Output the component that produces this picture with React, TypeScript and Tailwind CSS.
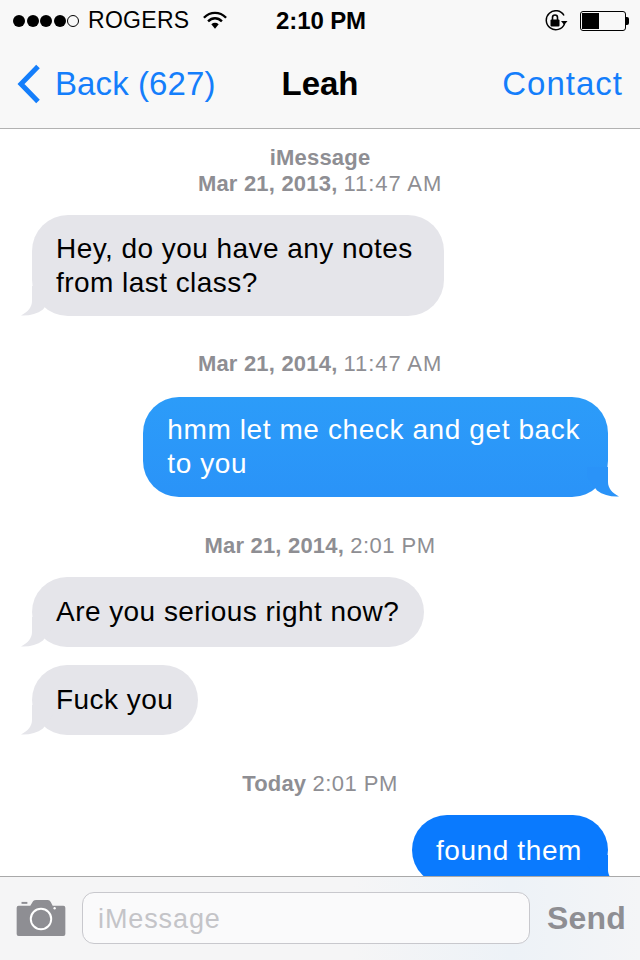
import React from "react";

function Tail({ side, color }: { side: "left" | "right"; color: string }) {
  return (
    <svg
      width="34"
      height="30"
      viewBox="0 0 34 30"
      className={side === "left" ? "absolute left-[-11px] bottom-0" : "absolute right-[-11px] bottom-0 -scale-x-100"}
    >
      <path d="M11 0 L11 15 C11 21 7 26 0 29.5 C8 30 16 28 22 23.5 L32 10 L32 0 Z" fill={color} />
    </svg>
  );
}

function Stamp({ bold, light, cls, lightCls }: { bold: string; light: string; cls: string; lightCls: string }) {
  return (
    <div className={`shrink-0 text-center text-[22px] leading-[26px] text-[#8e8e93] ${cls}`}>
      <span className="font-bold tracking-[0.2px]">{bold}</span>{" "}
      <span className={lightCls}>{light}</span>
    </div>
  );
}

function In({ children, cls }: { children: React.ReactNode; cls: string }) {
  return (
    <div className={`relative ml-[32px] shrink-0 rounded-[36px] bg-[#e5e5ea] pl-[24px] text-[28px] leading-[34px] tracking-[0.45px] text-black ${cls}`}>
      <Tail side="left" color="#e5e5ea" />
      <div className="relative">{children}</div>
    </div>
  );
}

function Out({ children, cls, tail }: { children: React.ReactNode; cls: string; tail: string }) {
  return (
    <div className={`relative mr-[32px] shrink-0 self-end rounded-[36px] pl-[24px] text-[28px] leading-[34px] tracking-[0.6px] text-white ${cls}`}>
      <Tail side="right" color={tail} />
      <div className="relative">{children}</div>
    </div>
  );
}

export default function App() {
  return (
    <div className="flex h-[960px] w-[640px] flex-col overflow-hidden bg-white font-['Liberation_Sans',Arial,sans-serif]">
      <header className="h-[129px] shrink-0 border-b border-[#b2b2b2] bg-[#f8f8f8]">
        <div className="relative flex h-[41px] items-center pl-[13px] pr-[11px] text-black">
          <div className="flex items-center gap-[1.5px]">
            {[0, 1, 2, 3].map((i) => (
              <span key={i} className="h-[12px] w-[12px] rounded-full bg-black" />
            ))}
            <span className="h-[12px] w-[12px] rounded-full border border-black" />
          </div>
          <span className="ml-[9px] text-[23px] leading-none tracking-[0.3px]">ROGERS</span>
          <svg width="24" height="19" viewBox="0 0 26 20" className="ml-[14px]">
            <path d="M1 7 C8 0 18 0 25 7 M5.5 11 C10 6.5 16 6.5 20.5 11" fill="none" stroke="black" strokeWidth="2.6" />
            <path d="M9 14 C11.5 12 14.5 12 17 14 L13 19 Z" fill="black" />
          </svg>
          <span className="absolute left-[276px] text-[24px] font-bold leading-none tracking-[-0.1px]">2:10 PM</span>
          <div className="ml-auto flex items-center gap-[12px]">
            <svg width="24" height="22" viewBox="0 0 24 22">
              <path d="M20 5.5 A9.5 9.5 0 1 0 20.5 14" fill="none" stroke="black" strokeWidth="1.5" />
              <path d="M17 11 L23.5 11 L20.2 15 Z" fill="black" />
              <rect x="6.5" y="9.5" width="9" height="7" rx="1" fill="black" />
              <path d="M8.5 10 V7.5 A2.5 2.5 0 0 1 13.5 7.5 V10" fill="none" stroke="black" strokeWidth="1.6" />
            </svg>
            <div className="flex items-center">
              <div className="h-[20px] w-[46px] rounded-[3px] border border-black p-[1px]">
                <div className="h-full w-[17px] bg-black" />
              </div>
              <div className="h-[8px] w-[3px] rounded-r-[2px] bg-black" />
            </div>
          </div>
        </div>
        <div className="relative flex h-[87px] items-center justify-between pb-[2px] pl-[17px] pr-[17px] text-[33px] text-[#147efb]">
          <div className="flex items-center gap-[14px]">
            <svg width="24" height="40" viewBox="0 0 24 40">
              <path d="M21 2.5 L4 20 L21 37.5" fill="none" stroke="#147efb" strokeWidth="5" />
            </svg>
            <span className="tracking-[0.1px]">Back (627)</span>
          </div>
          <span className="absolute left-0 right-0 text-center font-bold text-black">Leah</span>
          <span className="relative tracking-[1px]">Contact</span>
        </div>
      </header>

      <main className="flex min-h-0 flex-1 flex-col overflow-hidden">
        <Stamp bold="iMessage" light="" lightCls="" cls="mt-[16px]" />
        <Stamp bold="Mar 21, 2013," light="11:47 AM" lightCls="tracking-[0.9px]" cls="" />
        <In cls="mt-[18px] w-[412px] py-[16.5px]">
          Hey, do you have any notes
          <br />
          from last class?
        </In>
        <Stamp bold="Mar 21, 2014," light="11:47 AM" lightCls="tracking-[0.9px]" cls="mt-[35px]" />
        <Out cls="mt-[20px] bg-[linear-gradient(#2c9cf9,#2a93f8)] py-[16px] pr-[28px]" tail="#2a93f8">
          hmm let me check and get back
          <br />
          to you
        </Out>
        <Stamp bold="Mar 21, 2014," light="2:01 PM" lightCls="tracking-[0.5px]" cls="mt-[36px]" />
        <In cls="mt-[18px] w-fit py-[18px] pr-[25px]">Are you serious right now?</In>
        <In cls="mt-[18px] w-fit py-[18px] pr-[25px]">Fuck you</In>
        <Stamp bold="Today" light="2:01 PM" lightCls="tracking-[0.5px]" cls="mt-[36px]" />
        <Out cls="mt-[18px] bg-[#0a7afe] pb-[17px] pr-[26px] pt-[19px]" tail="#0a7afe">
          found them
        </Out>
      </main>

      <footer className="flex h-[84px] shrink-0 items-center border-t border-[#a9a9a9] bg-[linear-gradient(90deg,#f5f5f6,#f5f5f6_55%,#edf2f7_80%,#f4f5f7)] pb-[2px] pl-[16px] pr-[14px]">
        <svg width="50" height="37" viewBox="0 0 50 38" className="shrink-0">
          <path
            d="M2 7 H14 L17 2 Q18 1 20 1 H32 Q34 1 35 3 L37 7 H48 Q50 7 50 9 V36 Q50 38 48 38 H2 Q0 38 0 36 V9 Q0 7 2 7 Z"
            fill="#8e8e93"
          />
          <rect x="5" y="3" width="6" height="2" fill="#8e8e93" />
          <circle cx="25" cy="20.5" r="10.5" fill="none" stroke="white" strokeWidth="2" />
          <circle cx="39" cy="9.5" r="1.2" fill="white" />
        </svg>
        <div className="ml-[16px] flex h-[52px] w-[448px] items-center rounded-[12px] border border-[#c8c8cd] bg-[#fafafb] pl-[15px] pt-[3px] text-[27px] tracking-[0.9px] text-[#c4c4c8]">
          iMessage
        </div>
        <span className="ml-auto text-[32px] font-bold leading-none tracking-[0.2px] text-[#8e8e93]">Send</span>
      </footer>
    </div>
  );
}
